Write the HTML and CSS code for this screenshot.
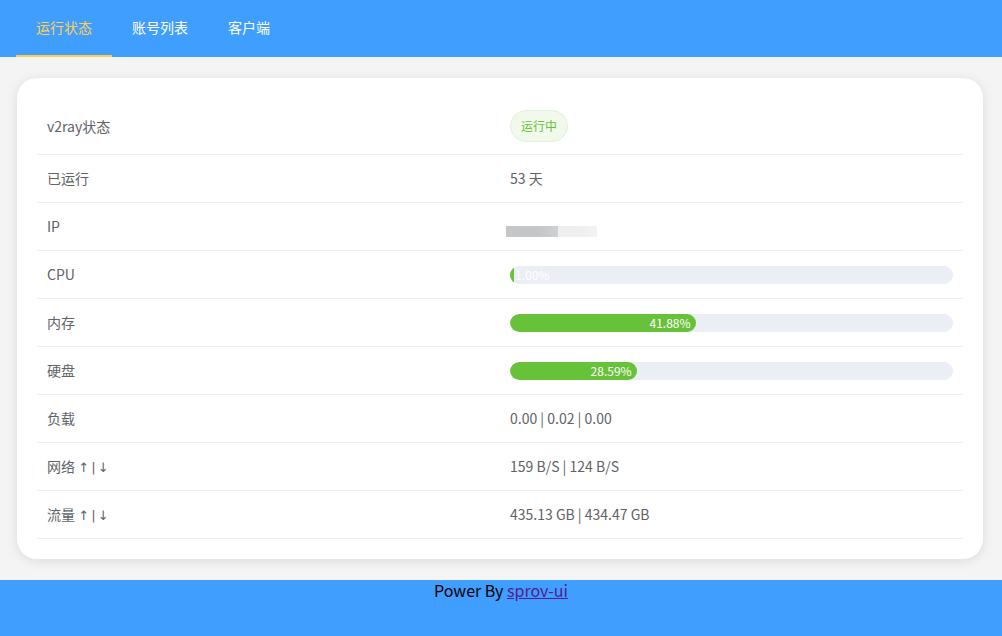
FILE: index.html
```html
<!DOCTYPE html>
<html lang="zh-CN">
<head>
<meta charset="utf-8">
<title>sprov-ui</title>
<link rel="stylesheet" href="styles.css">
</head>
<body>
<header class="header">
  <nav class="menu">
    <a class="menu-item active">运行状态</a>
    <a class="menu-item">账号列表</a>
    <a class="menu-item">客户端</a>
  </nav>
</header>
<main class="main">
  <section class="card">
    <div class="row row-first">
      <div class="cell">v2ray状态</div>
      <div class="cell"><span class="tag">运行中</span></div>
    </div>
    <div class="row">
      <div class="cell">已运行</div>
      <div class="cell">53 天</div>
    </div>
    <div class="row">
      <div class="cell">IP</div>
      <div class="cell"><span class="blur"><span class="blur-dark"></span><span class="blur-light"></span></span></div>
    </div>
    <div class="row">
      <div class="cell">CPU</div>
      <div class="cell"><div class="bar"><div class="fill" style="width:1%"><span class="bar-text">1.00%</span></div></div></div>
    </div>
    <div class="row">
      <div class="cell">内存</div>
      <div class="cell"><div class="bar"><div class="fill" style="width:41.88%"><span class="bar-text">41.88%</span></div></div></div>
    </div>
    <div class="row">
      <div class="cell">硬盘</div>
      <div class="cell"><div class="bar"><div class="fill" style="width:28.59%"><span class="bar-text">28.59%</span></div></div></div>
    </div>
    <div class="row">
      <div class="cell">负载</div>
      <div class="cell">0.00 | 0.02 | 0.00</div>
    </div>
    <div class="row">
      <div class="cell">网络<span class="arrows"> ↑ | ↓</span></div>
      <div class="cell">159 B/S | 124 B/S</div>
    </div>
    <div class="row">
      <div class="cell">流量<span class="arrows"> ↑ | ↓</span></div>
      <div class="cell">435.13 GB | 434.47 GB</div>
    </div>
  </section>
</main>
<footer class="footer">
  Power By <a class="footer-link" href="#">sprov-ui</a>
</footer>
</body>
</html>
```
FILE: styles.css
```css
* { box-sizing: border-box; }
html, body { margin: 0; padding: 0; }
body {
  background: #f4f4f5;
  font-family: "Noto Sans CJK SC", "Noto Sans", sans-serif;
  height: 636px;
  overflow: hidden;
}
.header {
  background: #409eff;
  height: 57px;
  padding: 0 16px;
}
.menu {
  display: flex;
  height: 57px;
}
.menu-item {
  display: block;
  height: 57px;
  line-height: 55px;
  padding: 0 20px;
  font-size: 14px;
  color: #ffffff;
  border-bottom: 2px solid transparent;
  cursor: pointer;
}
.menu-item.active {
  color: #ffd04b;
  border-bottom-color: #ffd04b;
}
.main {
  padding: 21px 19px 21px 17px;
}
.card {
  background: #ffffff;
  border-radius: 20px;
  box-shadow: 0 2px 12px rgba(0, 0, 0, 0.1);
  padding: 20px;
  height: 481px;
}
.row {
  display: grid;
  grid-template-columns: 1fr 1fr;
  border-bottom: 1px solid #ebeef5;
  height: 48px;
  align-items: center;
  font-size: 14px;
  color: #606266;
}
.row-first {
  height: 57px;
}
.cell {
  padding: 0 10px;
  line-height: 23px;
}
.arrows {
  font-family: "DejaVu Sans", sans-serif;
  font-size: 13px;
  letter-spacing: -1px;
}
.tag {
  display: inline-block;
  height: 32px;
  line-height: 30px;
  padding: 0 10px;
  font-size: 12px;
  color: #67c23a;
  background: #f0f9eb;
  border: 1px solid #e1f3d8;
  border-radius: 16px;
  vertical-align: middle;
}
.blur {
  display: flex;
  height: 11px;
  margin: 9px 0 0 -4px;
}
.blur-dark {
  width: 52px;
  background: linear-gradient(90deg, #c6c7c8 0%, #c3c6c7 30%, #c4c5c6 60%, #cfd0d1 100%);
}
.blur-light {
  width: 39px;
  background: linear-gradient(90deg, #eeefef 0%, #efefef 60%, #f4f4f4 100%);
}
.bar {
  height: 18px;
  background: #ebeef5;
  border-radius: 9px;
  overflow: hidden;
}
.fill {
  height: 18px;
  background: #67c23a;
  border-radius: 9px;
  text-align: right;
  white-space: nowrap;
  line-height: 18px;
}
.bar-text {
  display: inline-block;
  margin: 0 5px;
  font-size: 12px;
  color: #ffffff;
  vertical-align: top;
}
.footer {
  background: #409eff;
  height: 56px;
  text-align: center;
  font-size: 16px;
  line-height: 21px;
  padding-top: 0;
  color: #000000;
}
.footer-link {
  color: #551a8b;
  text-decoration: underline;
}
```
